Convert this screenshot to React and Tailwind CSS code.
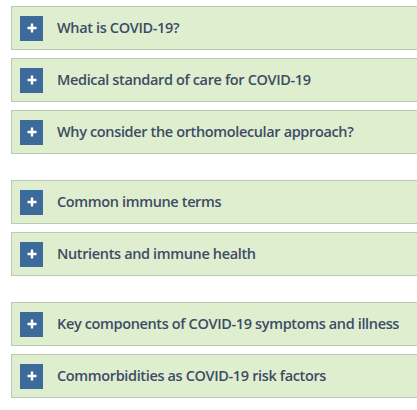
const groups = [
  ['What is COVID-19?', 'Medical standard of care for COVID-19', 'Why consider the orthomolecular approach?'],
  ['Common immune terms', 'Nutrients and immune health'],
  ['Key components of COVID-19 symptoms and illness', 'Commorbidities as COVID-19 risk factors'],
];

function Item({ title }) {
  return (
    <div className="flex h-[44px] items-center border border-[#bccab4] bg-[#dfeecf] pl-[8px]">
      <span className="flex h-[25px] w-[23px] shrink-0 items-center justify-center bg-[#3b6a9b]">
        <svg width="10" height="10" viewBox="0 0 10 10">
          <path d="M5 0.5v9M0.5 5h9" stroke="white" strokeWidth="2.4" />
        </svg>
      </span>
      <span className="ml-[14px] whitespace-nowrap text-[14.5px] font-semibold tracking-[-0.36px] text-[#3d4c66]">{title}</span>
    </div>
  );
}

export default function App() {
  return (
    <div className="flex h-[410px] w-[417px] flex-col gap-[26px] overflow-hidden bg-white pl-[11px] pt-[6px] font-['Open_Sans',sans-serif]">
      {groups.map((g, i) => (
        <div key={i} className="-mr-[10px] flex flex-col gap-[8px]">
          {g.map((t) => (
            <Item key={t} title={t} />
          ))}
        </div>
      ))}
    </div>
  );
}
